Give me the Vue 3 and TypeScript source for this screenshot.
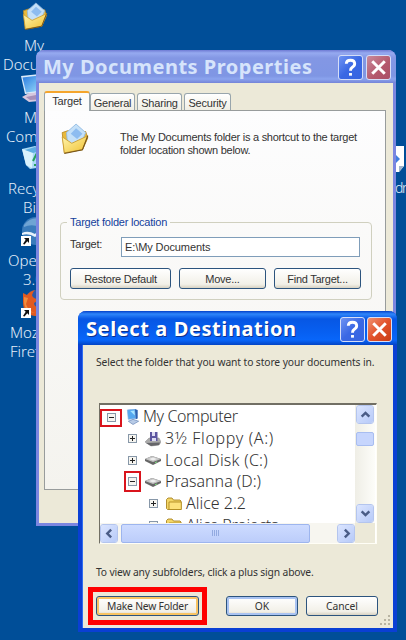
<template>
  <div class="desktop">
    <svg class="defs" width="0" height="0">
      <defs>
        <linearGradient id="gold" x1="0" y1="0" x2="1" y2="1">
          <stop offset="0" stop-color="#fff6b0" />
          <stop offset="1" stop-color="#f0c030" />
        </linearGradient>
        <linearGradient id="screen" x1="0" y1="0" x2="1" y2="1">
          <stop offset="0" stop-color="#2a7be0" />
          <stop offset="1" stop-color="#9fe0fb" />
        </linearGradient>
        <symbol id="documents" viewBox="0 0 28 30">
          <path d="M2 9 L8 7 L10 9 L24 8 L26 14 L21 25 L4 28 Z" fill="#e8b93c" stroke="#b98a24" stroke-width=".8" />
          <path d="M6 9 L15 1 L24 9 L19 21 L7 19 Z" fill="#c4e0f8" stroke="#8fb8e0" stroke-width=".8" />
          <path d="M10 10 L15 5 L21 10 L16 15 Z" fill="#8dbcf0" />
          <path d="M2 13 L11 19 L26 12 L21 25 L4 28 Z" fill="url(#gold)" stroke="#c99a2c" stroke-width=".8" />
          <path d="M26 12 L21 25 L4 28.5" fill="none" stroke="#76551c" stroke-width="1" />
        </symbol>
        <symbol id="computer" viewBox="0 0 28 29">
          <path d="M0 2 L19 0 L23 18 L4 20 Z" fill="#dcecfa" />
          <path d="M1.500 3.500 L18 1.500 L21 16.500 L5 18.500 Z" fill="url(#screen)" />
          <path d="M1 23 L8 19 L24 18 L28 26 L8 28 Z" fill="#d7c8de" />
          <path d="M5 23 L20 20 L25 25 L9 26 Z" fill="#a890b8" />
        </symbol>
        <symbol id="recycle" viewBox="0 0 28 29">
          <path d="M1 4 L14 1 L25 5 L22 22 L9 24 L5 20 Z" fill="#a9d9f5" />
          <path d="M1 4 L12 7 L11 23 L5 20 Z" fill="#d9f2fd" />
          <path d="M4 5 L14 2 L23 5 L12 8 Z" fill="#5eaee2" />
          <path d="M12 16 L15 10 L17 13 M13 20 L18 20" fill="none" stroke="#27a05c" stroke-width="2" />
        </symbol>
        <symbol id="office" viewBox="0 0 28 29">
          <circle cx="15" cy="14" r="14" fill="#3a7cbc" />
          <path d="M3 8 Q10 -1 20 2 L22 11 Q11 6 3 10 Z" fill="#6fa4d4" />
          <path d="M1 16 Q7 13 14 17 Q18 12 27 13 Q20 15 14 20 Q8 16 1 18 Z" fill="#e8f2fb" />
        </symbol>
        <symbol id="firefox" viewBox="0 0 28 29">
          <circle cx="15" cy="12" r="11" fill="#2b59a8" />
          <path d="M2 4 L6 6 Q9 2 14 1 Q9 6 13 9 L18 11 L13 14 Q13 19 20 18 L28 14 Q26 27 14 27 Q2 26 2 13 Z" fill="#e05a20" />
          <path d="M3 8 L7 9 L5 15 Q7 22 14 24 Q3 23 3 12 Z" fill="#f28c3c" />
        </symbol>
        <symbol id="pc" viewBox="0 0 14 17">
          <path d="M1 1 L9 0 L10 10 L2 11 Z" fill="#55a8ef" stroke="#82aee0" stroke-width=".7" />
          <path d="M4 2 L8.500 1.500 L9 7 Z" fill="#a9e5ff" />
          <path d="M9 0 L12 1 L12 10 L10 11 Z" fill="#2c61b0" />
          <path d="M2 13 L7 11 L13 13 L7 16.500 Z" fill="#b8cbe6" stroke="#6583b4" stroke-width=".7" />
        </symbol>
        <symbol id="floppy" viewBox="0 0 16 16">
          <path d="M0 11 L4 7 L14 7 L16 11 L14 14 L6 15 Z" fill="#aaa" stroke="#888" stroke-width=".5" />
          <path d="M1 12 L15 11.500 L14 14 L6 15 Z" fill="#66666a" />
          <path d="M5 1 L12.500 1 L12.500 10 L5 10 Z" fill="#5c56a0" />
          <path d="M7 1 H10 V5 H7 Z M7 7 H11 V10 H7 Z" fill="#dddcf2" />
        </symbol>
        <symbol id="disk" viewBox="0 0 16 16">
          <path d="M0 7 L7 4 L16 7 L16 9 L8 13 L0 9 Z" fill="#666" />
          <path d="M0 7 L7 4 L16 7 L8 10 Z" fill="#c4c4c4" />
          <path d="M4 7 L8 5.500 L12 7 L8 8.500 Z" fill="#efefef" />
          <path d="M10 10.800 L12 9.900" stroke="#7be07b" stroke-width="1" />
        </symbol>
        <symbol id="folder" viewBox="0 0 16 16">
          <path d="M.5 3.500 L2 2 H6 L7.500 4 H14 L15 5 V13.500 H1.500 L.5 12.500 Z" fill="#f3d667" stroke="#a98522" stroke-width=".9" />
          <path d="M3 6 H15.300 V13.500 H3 Z" fill="#fde27c" stroke="#b08b20" stroke-width=".9" />
        </symbol>
      </defs>
    </svg>

    <div class="shortcuts">
      <div v-for="s in shortcuts" :key="s.icon" class="shortcut">
        <svg class="shortcut-icon"><use :href="'#' + s.icon" /></svg>
        <svg v-if="s.link" class="arrow" viewBox="0 0 10 10">
          <rect width="10" height="10" fill="#fff" />
          <path d="M3 2 H8 V7 L6.300 5.300 L3.500 8.500 L2 8 L4.700 3.700 Z" fill="#111" />
        </svg>
        <div v-for="line in s.lines" :key="line.text" class="label" :style="{ paddingLeft: line.indent + 'px' }">
          {{ line.text }}
        </div>
      </div>
    </div>
    <div class="side-shortcut">
      <svg width="24" height="26" viewBox="0 0 24 26">
        <path d="M0 0 H22 V20 L17 26 H0 Z" fill="#fff" />
        <path d="M17 26 V20 H22 Z" fill="#9fb4cc" />
        <path d="M10 9 L14 9 L18 13 L14 17 L10 17 Z" fill="#3f7ee0" />
      </svg>
      <span>dr</span>
    </div>

    <section class="window properties">
      <header class="titlebar">
        <h1>My Documents Properties</h1>
        <button class="caption help"><svg viewBox="0 0 22 22"><path d="M7 7.500 Q7 4 11 4 Q15 4 15 7.500 Q15 9.500 12.500 11 Q11 12 11 14" /><path d="M11 16.300 V18.800" /></svg></button>
        <button class="caption close"><svg viewBox="0 0 22 22"><path d="M5 5 L17 17 M17 5 L5 17" /></svg></button>
      </header>
      <nav class="tabs">
        <div v-for="t in tabs" :key="t.text" class="tab" :class="{ active: t.active }" :style="{ width: t.width + 'px' }">
          {{ t.text }}
        </div>
      </nav>
      <div class="page">
        <div class="intro">
          <svg width="30" height="32"><use href="#documents" /></svg>
          <p>The My Documents folder is a shortcut to the target<br />folder location shown below.</p>
        </div>
        <fieldset class="location">
          <legend>Target folder location</legend>
          <div class="field">
            <label>Target:</label>
            <div class="input">E:\My Documents</div>
          </div>
          <div class="actions">
            <button class="btn restore">Restore Default</button>
            <button class="btn">Move...</button>
            <button class="btn">Find Target...</button>
          </div>
        </fieldset>
      </div>
    </section>

    <section class="window destination">
      <header class="titlebar">
        <h1>Select a Destination</h1>
        <button class="caption help"><svg viewBox="0 0 22 22"><path d="M7 7.500 Q7 4 11 4 Q15 4 15 7.500 Q15 9.500 12.500 11 Q11 12 11 14" /><path d="M11 16.300 V18.800" /></svg></button>
        <button class="caption close"><svg viewBox="0 0 22 22"><path d="M5 5 L17 17 M17 5 L5 17" /></svg></button>
      </header>
      <div class="content">
        <p class="hint">Select the folder that you want to store your documents in.</p>
        <div class="list">
          <div class="tree">
            <div v-for="n in nodes" :key="n.text" class="node" :style="{ paddingLeft: n.indent + 'px' }">
              <span class="mark" :class="n.mark">
                <svg width="9" height="9" viewBox="0 0 9 9">
                  <rect x=".5" y=".5" width="8" height="8" fill="#f6f5f0" stroke="#8797a8" />
                  <path d="M2 4.500 H7" stroke="#222" />
                  <path v-if="!n.open" d="M4.500 2 V7" stroke="#222" />
                </svg>
              </span>
              <svg class="node-icon" :class="n.icon"><use :href="'#' + n.icon" /></svg>
              <span class="node-text" :style="{ letterSpacing: n.spacing + 'px' }">{{ n.text }}</span>
            </div>
          </div>
          <div class="vscroll">
            <div class="scroll-btn"><svg viewBox="0 0 10 10"><path d="M1.500 7 L5 3.500 L8.500 7" /></svg></div>
            <div class="vthumb"></div>
            <div class="scroll-btn"><svg viewBox="0 0 10 10"><path d="M1.500 3 L5 6.500 L8.500 3" /></svg></div>
          </div>
          <div class="hscroll">
            <div class="scroll-btn"><svg viewBox="0 0 10 10"><path d="M6.500 1.500 L3 5 L6.500 8.500" /></svg></div>
            <div class="hthumb"><i v-for="i in 4" :key="i"></i></div>
            <div class="scroll-btn"><svg viewBox="0 0 10 10"><path d="M3.500 1.500 L7 5 L3.500 8.500" /></svg></div>
          </div>
          <div class="corner"></div>
        </div>
        <p class="hint below">To view any subfolders, click a plus sign above.</p>
        <div class="footer">
          <div class="highlight"><button class="btn hot">Make New Folder</button></div>
          <button class="btn default">OK</button>
          <button class="btn cancel">Cancel</button>
        </div>
      </div>
      <svg class="grip" width="12" height="12" viewBox="0 0 12 12">
        <path d="M9 1h2v2h-2z M5 5h2v2h-2z M9 5h2v2h-2z M1 9h2v2h-2z M5 9h2v2h-2z M9 9h2v2h-2z" fill="#b8b4a2" />
      </svg>
    </section>
  </div>
</template>

<script setup lang="ts">
interface Line {
  text: string
  indent: number
}

interface Shortcut {
  icon: string
  link?: boolean
  lines: Line[]
}

interface TreeNode {
  text: string
  icon: string
  indent: number
  spacing: number
  open?: boolean
  mark?: string
}

const shortcuts: Shortcut[] = [
  { icon: 'documents', lines: [{ text: 'My', indent: 24 }, { text: 'Documents', indent: 3 }] },
  { icon: 'computer', lines: [{ text: 'My', indent: 24 }, { text: 'Computer', indent: 6 }] },
  { icon: 'recycle', lines: [{ text: 'Recycle', indent: 8 }, { text: 'Bin', indent: 23 }] },
  { icon: 'office', link: true, lines: [{ text: 'OpenOffice', indent: 8 }, { text: '3.0', indent: 23 }] },
  { icon: 'firefox', link: true, lines: [{ text: 'Mozilla', indent: 10 }, { text: 'Firefox', indent: 10 }] }
]

const tabs = [
  { text: 'Target', width: 46, active: true },
  { text: 'General', width: 45 },
  { text: 'Sharing', width: 45 },
  { text: 'Security', width: 47 }
]

const nodes: TreeNode[] = [
  { text: 'My Computer', icon: 'pc', indent: 0, spacing: -0.4, open: true, mark: 'wide' },
  { text: '3½ Floppy (A:)', icon: 'floppy', indent: 24, spacing: 0.65 },
  { text: 'Local Disk (C:)', icon: 'disk', indent: 24, spacing: 0.25 },
  { text: 'Prasanna (D:)', icon: 'disk', indent: 24, spacing: 0, open: true, mark: 'narrow' },
  { text: 'Alice 2.2', icon: 'folder', indent: 45, spacing: 0 },
  { text: 'Alice Projects', icon: 'folder', indent: 45, spacing: -0.25 }
]
</script>

<style>
body {
  margin: 0;
}
</style>

<style scoped>
* {
  box-sizing: border-box;
}

.desktop {
  position: relative;
  width: 406px;
  height: 640px;
  overflow: hidden;
  background: #004e98;
  font-family: 'Liberation Sans', Arial, sans-serif;
  font-size: 11px;
  color: #333;
}

.defs {
  position: absolute;
}

h1,
p {
  margin: 0;
  white-space: nowrap;
}

.shortcuts {
  padding-top: 2px;
}

.shortcut {
  position: relative;
  height: 71.7px;
}

.shortcut-icon {
  display: block;
  width: 28px;
  height: 29px;
  margin: 0 0 5px 21px;
}

.arrow {
  position: absolute;
  left: 21px;
  top: 19px;
  width: 10px;
  height: 10px;
}

.label {
  height: 19px;
  line-height: 19px;
  font-family: 'Noto Sans', sans-serif;
  font-size: 15px;
  font-weight: 300;
  color: #e4effa;
  white-space: nowrap;
}

.side-shortcut {
  position: absolute;
  left: 382px;
  top: 146px;
  width: 24px;
  color: #e4effa;
  font: 300 14px/20px 'Noto Sans', sans-serif;
  letter-spacing: -1.5px;
}

.side-shortcut svg {
  display: block;
  margin-bottom: 6px;
}

.side-shortcut span {
  padding-left: 13px;
}

.window {
  position: absolute;
  display: flex;
  flex-direction: column;
  background: #ece9d8;
}

.properties {
  left: 36px;
  top: 50px;
  width: 360px;
  height: 476px;
  border: solid #7b86e0;
  border-width: 0 3px 3px;
  border-radius: 8px 8px 0 0;
}

.titlebar {
  display: flex;
  align-items: center;
  flex: none;
}

.titlebar h1 {
  flex: 1;
  font-family: 'Noto Sans', sans-serif;
  font-size: 20px;
  font-weight: 700;
  line-height: 24px;
}

.properties .titlebar {
  height: 33px;
  margin: 0 -3px;
  padding: 1px 5px 0 7px;
  border-radius: 8px 8px 0 0;
  background: linear-gradient(#6f7bd4, #96aaf0 3px, #8397e4 8px, #7f96e4 26px, #8ba4ee 29px, #7483d8);
}

.properties h1 {
  color: #d6e4fb;
  letter-spacing: 0.5px;
}

.caption {
  width: 25px;
  height: 25px;
  padding: 0;
  border: 1px solid #d5def8;
  border-radius: 3px;
}

.caption svg {
  display: block;
  width: 23px;
  height: 23px;
  fill: none;
  stroke: #fff;
  stroke-width: 2.8;
}

.help {
  margin-right: 3px;
  background: linear-gradient(135deg, #6f93f2, #3a68e4 50%, #3764e0);
}

.close {
  background: linear-gradient(135deg, #f0906f, #e2532c 50%, #c93c14);
}

.properties .close {
  background: linear-gradient(135deg, #c98a9c, #b4586c 60%, #a95068);
}

.tabs {
  display: flex;
  align-items: flex-end;
  height: 27px;
  padding-left: 5px;
}

.tab {
  height: 17px;
  margin-right: 2px;
  border: 1px solid #98a5ac;
  border-bottom: 0;
  border-radius: 3px 3px 0 0;
  background: linear-gradient(#fff, #f0eee4);
  text-align: center;
  line-height: 18px;
  letter-spacing: -0.2px;
}

.tab.active {
  position: relative;
  height: 20px;
  margin: 0 0 -1px;
  border-top: 2px solid #f5a52c;
  background: #fcfcfc;
  line-height: 17px;
}

.page {
  width: 342px;
  height: 380px;
  margin-left: 5px;
  padding: 12px 12px 0 15px;
  border: 1px solid #989c9c;
  background: linear-gradient(#fdfdfe, #f4f3ee);
}

.intro {
  display: flex;
  height: 92px;
}

.intro svg {
  flex: none;
}

.intro p {
  padding: 8px 0 0 30px;
  line-height: 13px;
  letter-spacing: -0.26px;
}

.location {
  min-width: 0;
  width: 312px;
  height: 85px;
  margin: 0;
  padding: 0 9px;
  border: 1px solid #d0d0bf;
  border-radius: 4px;
}

.properties legend {
  margin-left: -3px;
  padding: 0 3px;
  line-height: 14px;
  letter-spacing: -0.23px;
  color: #14419c;
  white-space: nowrap;
}

.field {
  display: flex;
  margin-top: 8px;
}

.field label {
  width: 51px;
  line-height: 15px;
  letter-spacing: -0.2px;
}

.input {
  width: 239px;
  height: 20px;
  padding-left: 3px;
  border: 1px solid #7f9db9;
  background: #fff;
  line-height: 18px;
  letter-spacing: -0.1px;
}

.actions {
  display: flex;
  gap: 8px;
  margin-top: 11px;
}

.btn {
  height: 21px;
  padding: 0;
  border: 1px solid #2c547e;
  border-radius: 3px;
  background: linear-gradient(#fff, #f2f0e8 80%, #d8d2c2);
  font: inherit;
  color: #333;
  white-space: nowrap;
}

.actions .btn {
  width: 87px;
  letter-spacing: -0.25px;
}

.actions .restore {
  width: 101px;
}

.destination {
  left: 78px;
  top: 311px;
  width: 319px;
  height: 321px;
  border: solid #0a3fd4;
  border-width: 0 4px 4px;
  border-radius: 8px 8px 0 0;
  box-shadow: inset 1px 0 #2e6cf0;
  font-family: 'Noto Sans', sans-serif;
}

.destination .titlebar {
  height: 34px;
  margin: 0 -4px;
  padding: 2px 5px 0 8px;
  border-radius: 8px 8px 0 0;
  background: linear-gradient(#0440c8, #2f86fa 3px, #0757e4 8px, #0760f2 22px, #0866fa 29px, #0344c4);
}

.destination h1 {
  color: #fff;
  letter-spacing: 0.6px;
  text-shadow: 1px 1px #0b318f;
}

.destination .help {
  margin-right: 2px;
}

.content {
  padding: 0 0 0 17px;
}

.hint {
  margin-left: -3px;
  padding-top: 9px;
  font-size: 10.3px;
  line-height: 16px;
  letter-spacing: -0.1px;
}

.list {
  display: grid;
  grid-template-columns: 255px 20px;
  grid-template-rows: 118px 20px;
  width: 278px;
  height: 141px;
  margin-top: 33px;
  border: solid #716f64;
  border-width: 2px 1px 1px;
  border-right-color: #fffef6;
  border-bottom-color: #fffef6;
  background: #fff;
}

.tree {
  overflow: hidden;
  height: 118px;
  padding-top: 1px;
}

.node {
  display: flex;
  align-items: center;
  height: 21.7px;
  font-size: 16px;
  font-weight: 300;
  white-space: nowrap;
}

.mark {
  display: flex;
  align-items: center;
  justify-content: center;
  flex: none;
  width: 17px;
  height: 18px;
}

.mark.wide {
  width: 22px;
  margin-top: 2px;
  border: 2px solid #d9141c;
}

.mark.narrow {
  height: 21px;
  border: 2px solid #d9141c;
}

.node-icon {
  flex: none;
  width: 16px;
  height: 16px;
  margin: 0 4px;
}

.node-icon.pc {
  width: 14px;
  margin: 0 3px 0 4px;
}

.node-text {
  line-height: 21px;
}

.vscroll {
  display: flex;
  flex-direction: column;
  padding: 0 1px;
  background: linear-gradient(90deg, #efeee6, #fdfdf9);
}

.scroll-btn {
  display: flex;
  align-items: center;
  justify-content: center;
  flex: none;
  width: 18px;
  height: 19px;
  border: 1px solid #fff;
  border-radius: 3px;
  outline: 1px solid #b4c5ee;
  outline-offset: -1px;
  background: linear-gradient(135deg, #dbe5ff, #b7caf8);
}

.scroll-btn svg {
  width: 11px;
  height: 11px;
  fill: none;
  stroke: #4a5c86;
  stroke-width: 2.2;
}

.vthumb {
  height: 14px;
  margin: 8px 0 auto;
  border: 1px solid #a8bdf0;
  border-radius: 2px;
  background: #c6d5fd;
}

.hscroll {
  display: flex;
  align-items: center;
  justify-content: space-between;
  background: #f7f6f0;
}

.hthumb {
  display: flex;
  align-items: center;
  justify-content: center;
  gap: 1px;
  width: 189px;
  height: 19px;
  margin: 0 auto 0 3px;
  border: 1px solid #9db5ee;
  border-radius: 2px;
  background: linear-gradient(#cddbff, #bccdfa);
}

.hthumb i {
  width: 1px;
  height: 6px;
  background: #93aae0;
}

.corner {
  background: #ece9d8;
}

.below {
  padding-top: 20px;
  letter-spacing: -0.15px;
}

.footer {
  display: flex;
  align-items: center;
  margin: 7px 0 0 -11px;
}

.highlight {
  width: 119px;
  height: 38px;
  padding: 4px 3px;
  border: 5px solid #fe0000;
}

.footer .btn {
  width: 72px;
  height: 20px;
  margin-left: 19px;
  font-size: 10.3px;
}

.footer .hot {
  display: block;
  width: 103px;
  margin: 0;
  font-size: 10.3px;
  letter-spacing: -0.2px;
  box-shadow: inset 0 0 0 2px #f8c463;
}

.footer .default {
  box-shadow: inset 0 0 0 2px #a9c3f2;
}

.footer .cancel {
  margin-left: 8px;
}

.grip {
  position: absolute;
  right: 2px;
  bottom: 2px;
}
</style>
